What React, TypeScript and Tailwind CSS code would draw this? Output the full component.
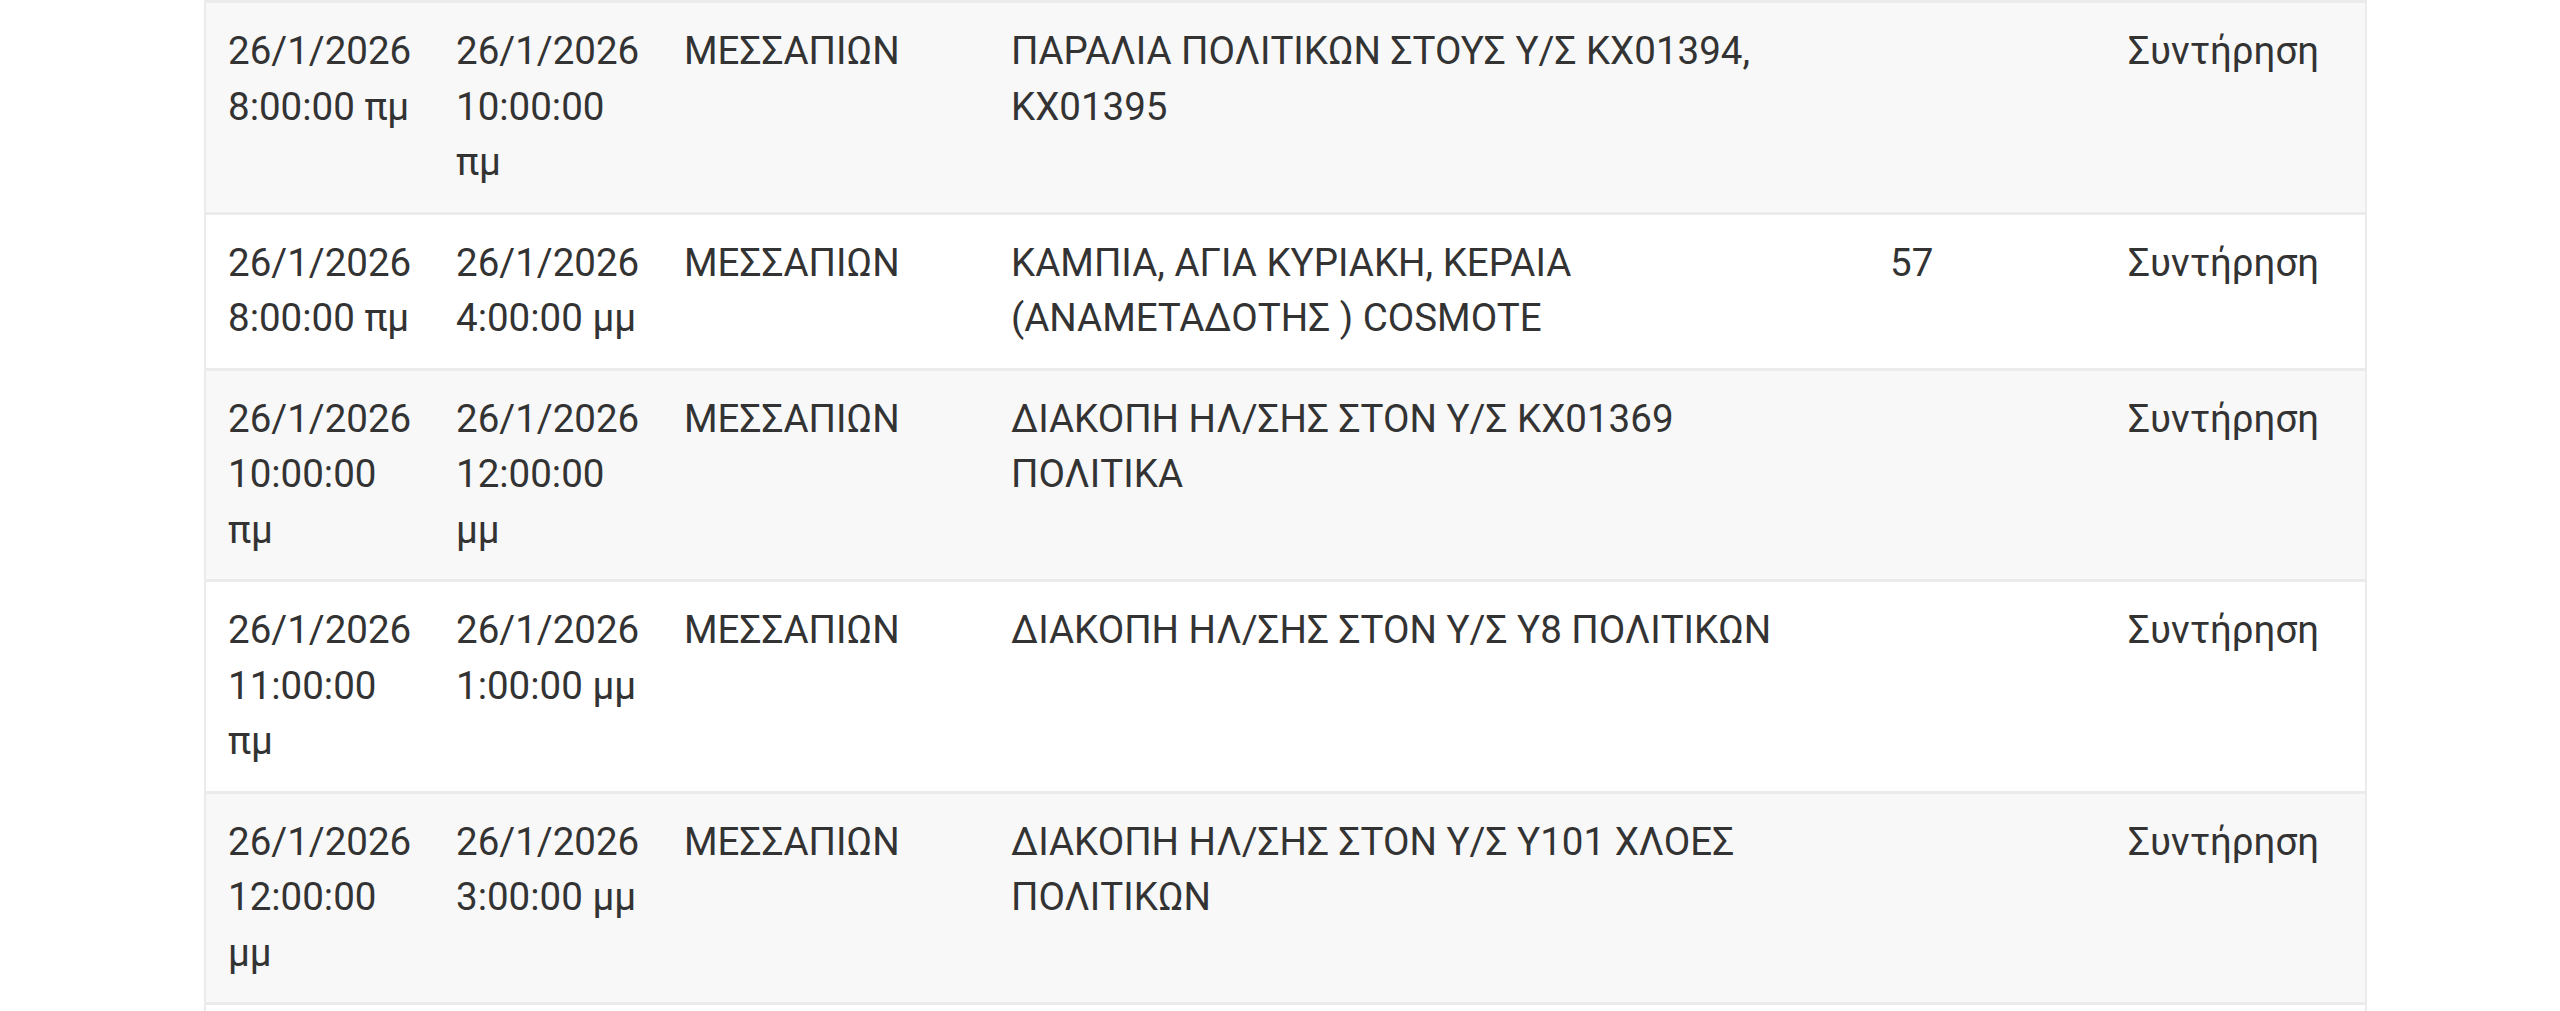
type Outage = {
  from: string;
  to: string;
  area: string;
  place: string;
  customers: string;
  reason: string;
};

const rows: Outage[] = [
  {
    from: "26/1/2026 8:00:00 πμ",
    to: "26/1/2026 10:00:00 πμ",
    area: "ΜΕΣΣΑΠΙΩΝ",
    place: "ΠΑΡΑΛΙΑ ΠΟΛΙΤΙΚΩΝ ΣΤΟΥΣ Υ/Σ ΚΧ01394, ΚΧ01395",
    customers: "",
    reason: "Συντήρηση",
  },
  {
    from: "26/1/2026 8:00:00 πμ",
    to: "26/1/2026 4:00:00 μμ",
    area: "ΜΕΣΣΑΠΙΩΝ",
    place: "ΚΑΜΠΙΑ, ΑΓΙΑ ΚΥΡΙΑΚΗ, ΚΕΡΑΙΑ (ΑΝΑΜΕΤΑΔΟΤΗΣ ) COSMOTE",
    customers: "57",
    reason: "Συντήρηση",
  },
  {
    from: "26/1/2026 10:00:00 πμ",
    to: "26/1/2026 12:00:00 μμ",
    area: "ΜΕΣΣΑΠΙΩΝ",
    place: "ΔΙΑΚΟΠΗ ΗΛ/ΣΗΣ ΣΤΟΝ Υ/Σ ΚΧ01369 ΠΟΛΙΤΙΚΑ",
    customers: "",
    reason: "Συντήρηση",
  },
  {
    from: "26/1/2026 11:00:00 πμ",
    to: "26/1/2026 1:00:00 μμ",
    area: "ΜΕΣΣΑΠΙΩΝ",
    place: "ΔΙΑΚΟΠΗ ΗΛ/ΣΗΣ ΣΤΟΝ Υ/Σ Υ8 ΠΟΛΙΤΙΚΩΝ",
    customers: "",
    reason: "Συντήρηση",
  },
  {
    from: "26/1/2026 12:00:00 μμ",
    to: "26/1/2026 3:00:00 μμ",
    area: "ΜΕΣΣΑΠΙΩΝ",
    place: "ΔΙΑΚΟΠΗ ΗΛ/ΣΗΣ ΣΤΟΝ Υ/Σ Υ101 ΧΛΟΕΣ ΠΟΛΙΤΙΚΩΝ",
    customers: "",
    reason: "Συντήρηση",
  },
  // next row, only its top edge is on screen
  { from: "", to: "", area: "", place: "", customers: "", reason: "" },
];

function Row({ row, striped }: { row: Outage; striped: boolean }) {
  return (
    <div
      className={`grid grid-cols-[228px_228px_327px_879px_238px_259px] border-t-[3px] border-[#ebebeb] ${
        striped ? "bg-[#f8f8f8]" : "bg-white"
      }`}
    >
      <div className="pl-[22px] pr-[18px] pt-[20px] pb-[22px]">{row.from}</div>
      <div className="pl-[22px] pr-[18px] pt-[20px] pb-[22px]">{row.to}</div>
      <div className="pl-[22px] pr-[22px] pt-[20px] pb-[22px]">{row.area}</div>
      <div className="pl-[22px] pr-[57px] pt-[20px] pb-[22px]">{row.place}</div>
      <div className="pl-[22px] pr-[22px] pt-[20px] pb-[22px]">{row.customers}</div>
      <div className="pl-[22px] pr-[22px] pt-[20px] pb-[22px]">{row.reason}</div>
    </div>
  );
}

export default function App() {
  return (
    <div className="h-[1011px] overflow-hidden bg-white font-['Roboto',sans-serif] text-[38.5px] leading-[55.5px] text-[#333333]">
      <div className="ml-[204px] w-[2163px] border-x-2 border-[#ebebeb]">
        {rows.map((r, i) => (
          <Row key={i} row={r} striped={i % 2 === 0} />
        ))}
      </div>
    </div>
  );
}
